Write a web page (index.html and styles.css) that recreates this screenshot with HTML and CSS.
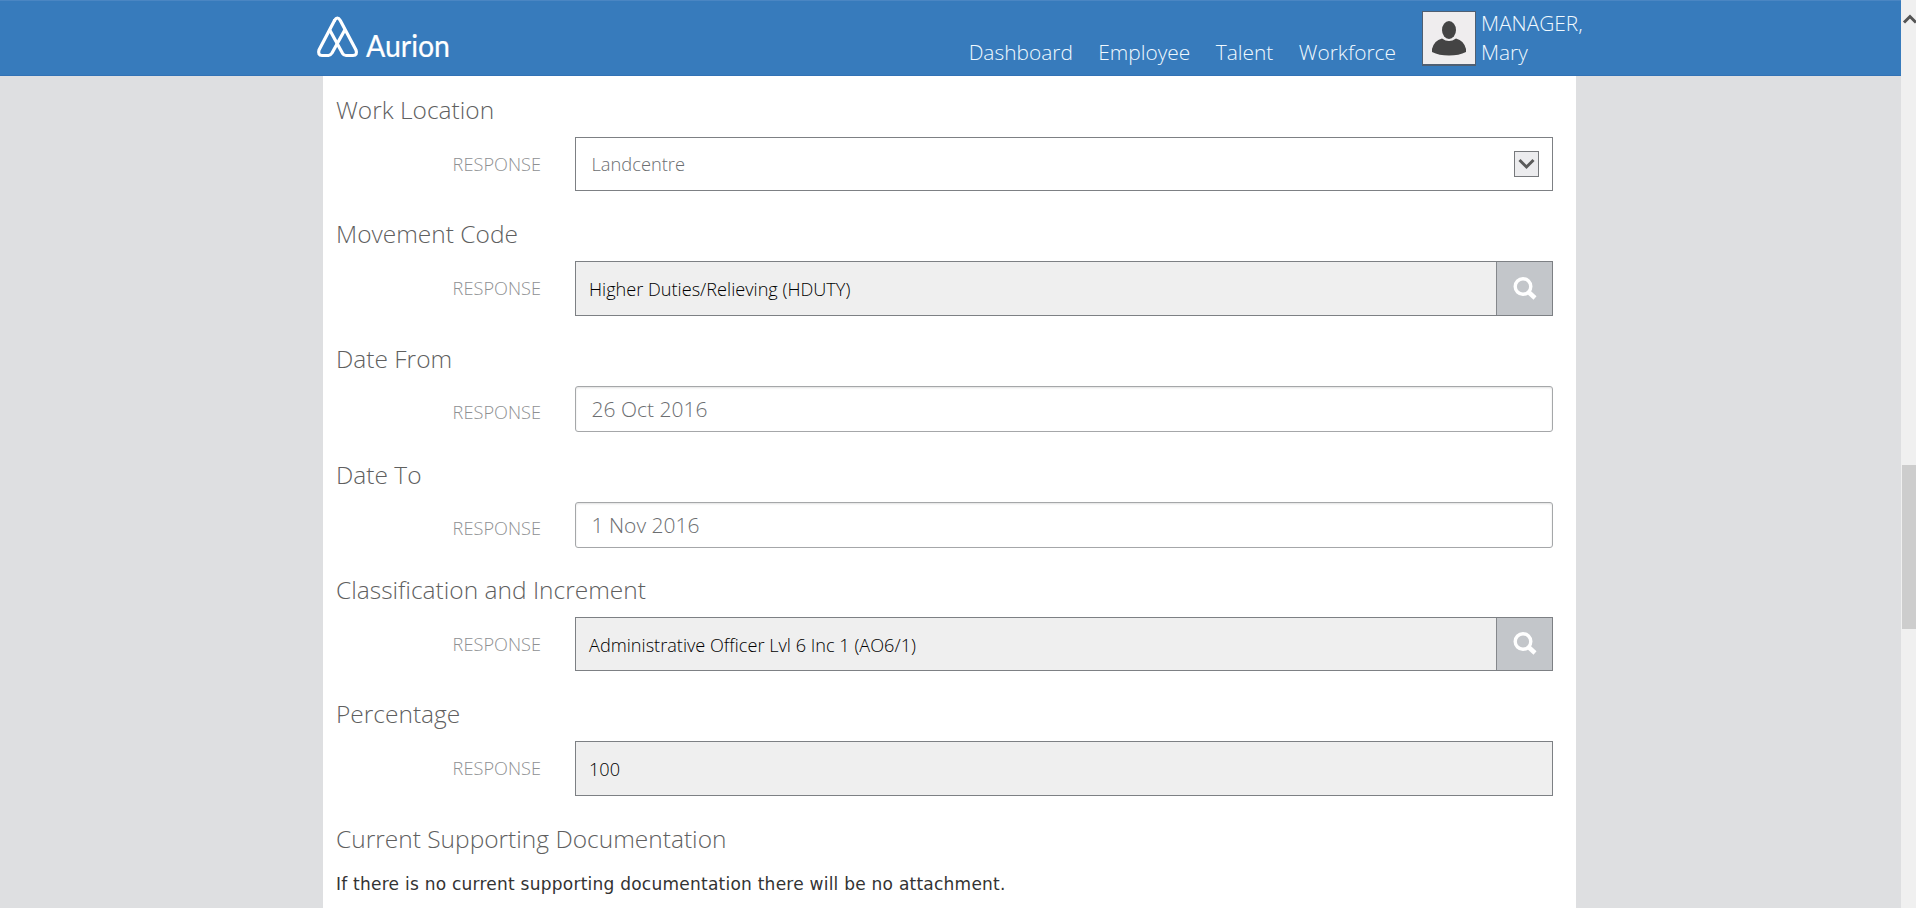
FILE: index.html
```html
<!DOCTYPE html>
<html lang="en">
<head>
<meta charset="utf-8">
<title>Aurion</title>
<link rel="stylesheet" href="styles.css">
</head>
<body>
<div class="viewport">
  <div class="page">
    <header class="topbar">
      <svg class="logo" width="140" height="60" viewBox="0 0 140 60" role="img" aria-label="Aurion">
        <g fill="none" stroke="#fff" stroke-width="3.200" stroke-linejoin="round" stroke-linecap="round">
          <path d="M18.500 8.500 3 38Q1.500 43.300 6 43.500H12.500Q14.500 43.300 16 41L28.500 18.500"/>
          <path d="M14 18.500 26.500 41.300Q28 43.500 30 43.500H37Q41.800 43.300 40 38L24.300 8.500Q21.400 3.500 18.500 8.500"/>
        </g>
        <text class="logo-text" x="50" y="45" textLength="84" lengthAdjust="spacingAndGlyphs">Aurion</text>
      </svg>
      <nav class="nav">
        <a class="nav-link">Dashboard</a>
        <a class="nav-link">Employee</a>
        <a class="nav-link">Talent</a>
        <a class="nav-link">Workforce</a>
      </nav>
      <div class="user">
        <span class="avatar">
          <svg width="52" height="52" viewBox="0 0 52 52">
            <ellipse cx="26" cy="18" rx="7" ry="9" fill="#444"/>
            <path d="M19 26.500Q26 31.500 33 26.500Q41 28.500 43 37V40Q36 43.500 26 43.500T9 40V37Q11 28.500 19 26.500Z" fill="#444"/>
          </svg>
        </span>
        <span class="user-name">MANAGER,<br>Mary</span>
      </div>
    </header>
    <main class="panel">
      <section class="question first">
        <h2 class="title">Work Location</h2>
        <div class="answer">
          <span class="label">RESPONSE</span>
          <div class="field select">
            <span class="value">Landcentre</span>
            <span class="drop"><svg width="23" height="24" viewBox="0 0 23 24"><path d="M4.500 8 11.500 15 18.500 8" fill="none" stroke="#5a5a5a" stroke-width="3"/></svg></span>
          </div>
        </div>
      </section>
      <section class="question">
        <h2 class="title">Movement Code</h2>
        <div class="answer">
          <span class="label">RESPONSE</span>
          <div class="field readonly lookup tall">
            <span class="value">Higher Duties/Relieving (HDUTY)</span>
            <span class="search"><svg width="24" height="24" viewBox="0 0 24 24"><circle cx="10" cy="9.500" r="7.800" fill="none" stroke="#fff" stroke-width="3.400"/><path d="M15.500 15 22 21" stroke="#fff" stroke-width="4.500"/></svg></span>
          </div>
        </div>
      </section>
      <section class="question">
        <h2 class="title">Date From</h2>
        <div class="answer date">
          <span class="label">RESPONSE</span>
          <div class="field input"><span class="value">26 Oct 2016</span></div>
        </div>
      </section>
      <section class="question">
        <h2 class="title">Date To</h2>
        <div class="answer date short">
          <span class="label">RESPONSE</span>
          <div class="field input"><span class="value">1 Nov 2016</span></div>
        </div>
      </section>
      <section class="question">
        <h2 class="title">Classification and Increment</h2>
        <div class="answer">
          <span class="label">RESPONSE</span>
          <div class="field readonly lookup">
            <span class="value">Administrative Officer Lvl 6 Inc 1 (AO6/1)</span>
            <span class="search"><svg width="24" height="24" viewBox="0 0 24 24"><circle cx="10" cy="9.500" r="7.800" fill="none" stroke="#fff" stroke-width="3.400"/><path d="M15.500 15 22 21" stroke="#fff" stroke-width="4.500"/></svg></span>
          </div>
        </div>
      </section>
      <section class="question">
        <h2 class="title">Percentage</h2>
        <div class="answer">
          <span class="label">RESPONSE</span>
          <div class="field readonly tall"><span class="value">100</span></div>
        </div>
      </section>
      <section class="question">
        <h2 class="title">Current Supporting Documentation</h2>
        <p class="note">If there is no current supporting documentation there will be no attachment.</p>
      </section>
    </main>
  </div>
  <aside class="scrollbar">
    <svg class="scroll-up" width="15" height="12" viewBox="0 0 15 12"><path d="M3 10.500 9 4.500 15 10.500" fill="none" stroke="#555" stroke-width="3"/></svg>
    <div class="thumb"></div>
  </aside>
</div>
</body>
</html>
```

FILE: styles.css
```css
* { box-sizing: border-box; }
body {
  margin: 0;
  overflow: hidden;
  font-family: "Open Sans", "Noto Sans", sans-serif;
  font-weight: 300;
}
.viewport { display: flex; height: 908px; overflow: hidden; }
.page { flex: 1; height: 908px; overflow: hidden; background: #dedfe1; }

.topbar {
  display: flex;
  height: 76px;
  padding-left: 316px;
  background: #377bbc;
  border-top: 1px solid #4a86c3;
  border-bottom: 1px solid #3272b5;
  color: #f0f9ff;
  font-size: 20.9px;
}
.logo { margin-top: 11px; overflow: visible; }
.logo-text {
  fill: #fff;
  stroke: #fff;
  stroke-width: 0.2px;
  font-family: Lato, sans-serif;
  font-size: 30px;
  font-weight: 400;
}
.nav {
  display: flex;
  justify-content: flex-end;
  gap: 25.5px;
  width: 940px;
  padding-top: 36px;
  line-height: 30px;
}
.user { display: flex; margin-left: 26px; padding-top: 10px; }
.avatar {
  width: 54px;
  height: 55px;
  border: 1px solid #4f5f72;
  border-bottom-width: 2px;
  background: #efedee;
}
.user-name { margin: -2px 0 0 5px; line-height: 29px; }

.panel {
  width: 1253px;
  height: 832px;
  margin-left: 323px;
  padding: 0 23px 0 13px;
  background: #fff;
}
.question { padding-top: 28px; }
.question.first { padding-top: 19px; }
.title {
  margin: 0 0 12px;
  font-size: 24.5px;
  font-weight: 300;
  line-height: 30px;
  color: #5f5f5f;
}
.answer { display: flex; }
.label {
  width: 205px;
  margin-right: 34px;
  text-align: right;
  font-size: 18.2px;
  line-height: 54px;
  height: 46px;
  color: #8e9092;
}
.date .label { line-height: 52px; }
.short { height: 45px; }
.field {
  display: flex;
  width: 978px;
  height: 54px;
  border: 1px solid #7d8084;
  font-size: 18.15px;
  line-height: 54px;
}
.field.tall { height: 55px; }
.value { flex: 1; padding-left: 15.5px; color: #6c6e71; }
.select { align-items: center; padding-right: 13px; font-size: 18.3px; }
.drop {
  width: 25px;
  height: 26px;
  border: 1px solid #77797c;
  background: #ececee;
}
.drop svg, .avatar svg, .search svg { display: block; }
.readonly { background: #efefef; }
.readonly .value { padding-left: 13px; color: #000; }
.search {
  display: flex;
  align-items: center;
  justify-content: center;
  width: 56px;
  border-left: 1px solid #85888c;
  background: #c3c6ca;
}
.input {
  height: 46px;
  border: 1.500px solid #a5a7a9;
  border-radius: 3px;
  box-shadow: inset 0 1px 2px rgba(0, 0, 0, 0.12);
  font-size: 21px;
  line-height: 45px;
}
.note {
  margin: 0;
  padding-top: 6px;
  font: 400 17px/24px "DejaVu Sans", Verdana, sans-serif;
  letter-spacing: 0.24px;
  color: #333;
  white-space: nowrap;
}

.scrollbar { width: 15px; height: 908px; padding-top: 12px; background: #f0f0f0; }
.scroll-up { display: block; }
.thumb { height: 164px; margin: 441px 0 0 1px; background: #cdcdcd; }
```
